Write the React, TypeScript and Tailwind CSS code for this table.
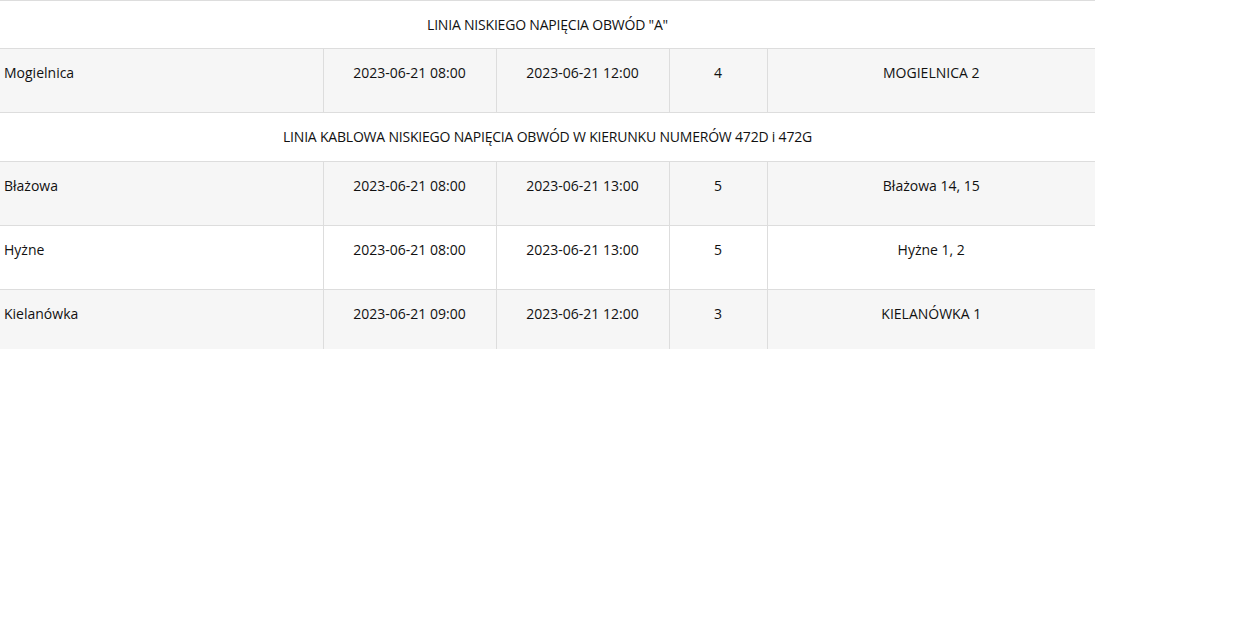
interface OutageRow {
  place: string;
  from: string;
  to: string;
  hours: string;
  address: string;
}

interface Section {
  title: string;
  rows: OutageRow[];
}

const sections: Section[] = [
  {
    title: 'LINIA NISKIEGO NAPIĘCIA OBWÓD "A"',
    rows: [
      {
        place: "Mogielnica",
        from: "2023-06-21 08:00",
        to: "2023-06-21 12:00",
        hours: "4",
        address: "MOGIELNICA 2",
      },
    ],
  },
  {
    title: "LINIA KABLOWA NISKIEGO NAPIĘCIA OBWÓD W KIERUNKU NUMERÓW 472D i 472G",
    rows: [
      {
        place: "Błażowa",
        from: "2023-06-21 08:00",
        to: "2023-06-21 13:00",
        hours: "5",
        address: "Błażowa 14, 15",
      },
      {
        place: "Hyżne",
        from: "2023-06-21 08:00",
        to: "2023-06-21 13:00",
        hours: "5",
        address: "Hyżne 1, 2",
      },
      {
        place: "Kielanówka",
        from: "2023-06-21 09:00",
        to: "2023-06-21 12:00",
        hours: "3",
        address: "KIELANÓWKA 1",
      },
    ],
  },
];

export default function App() {
  return (
    <div className="min-h-screen bg-white text-[14px] text-[#111111] font-['Open_Sans',sans-serif]">
      <table className="w-[1095px] table-fixed border-collapse border-t border-[#dddddd]">
        <colgroup>
          <col className="w-[323px]" />
          <col className="w-[173px]" />
          <col className="w-[173px]" />
          <col className="w-[98px]" />
          <col className="w-[328px]" />
        </colgroup>
        <tbody>
          {sections.map((section, si) => (
            <>
              <tr key={`h-${si}`} className="border-b border-[#dddddd] bg-white">
                <td
                  colSpan={5}
                  className={`${si === 0 ? "h-[48px]" : "h-[49px]"} p-0 text-center align-middle leading-5 tracking-[-0.2px]`}
                >
                  {section.title}
                </td>
              </tr>
              {section.rows.map((row, ri) => {
                const last = si === sections.length - 1 && ri === section.rows.length - 1;
                return (
                  <tr
                    key={`r-${si}-${ri}`}
                    className={`${ri % 2 === 0 ? "bg-[#f6f6f6]" : "bg-white"} ${last ? "" : "border-b border-[#dddddd]"}`}
                  >
                    <td className={`${last ? "h-[59px]" : "h-[64px]"} px-1 pt-[14px] align-top leading-5 border-r border-[#dddddd]`}>
                      {row.place}
                    </td>
                    <td className="pt-[14px] align-top text-center leading-5 border-r border-[#dddddd]">
                      {row.from}
                    </td>
                    <td className="pt-[14px] align-top text-center leading-5 border-r border-[#dddddd]">
                      {row.to}
                    </td>
                    <td className="pt-[14px] align-top text-center leading-5 border-r border-[#dddddd]">
                      {row.hours}
                    </td>
                    <td className="pt-[14px] align-top text-center leading-5">
                      {row.address}
                    </td>
                  </tr>
                );
              })}
            </>
          ))}
        </tbody>
      </table>
    </div>
  );
}
